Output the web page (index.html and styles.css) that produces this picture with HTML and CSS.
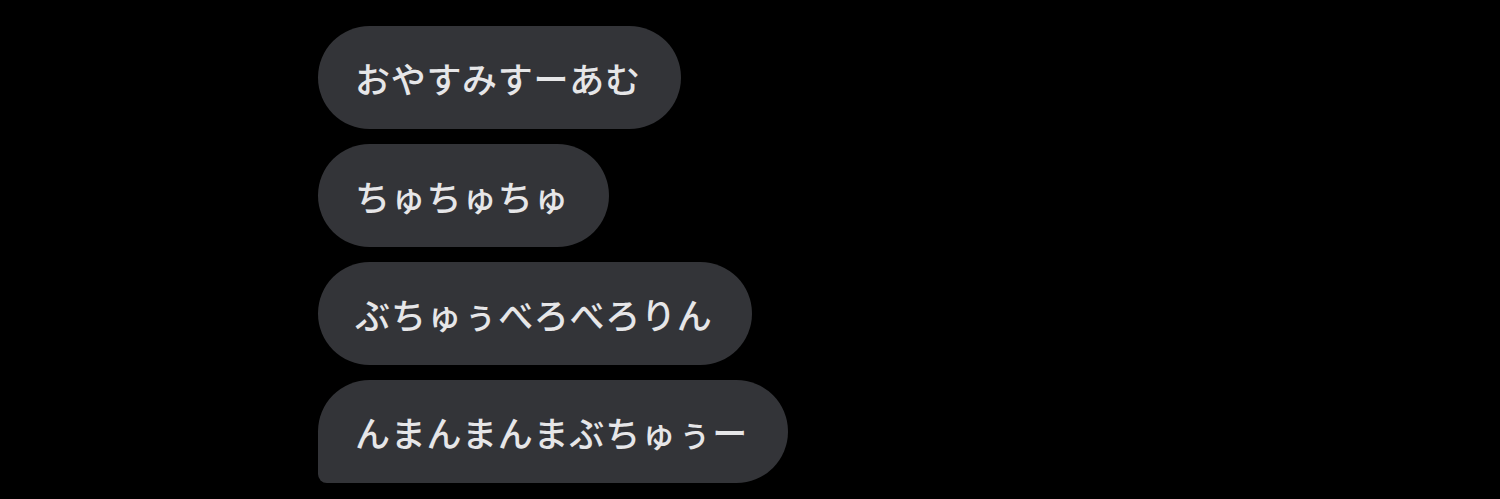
FILE: index.html
```html
<!DOCTYPE html>
<html lang="ja">
<head>
<meta charset="utf-8">
<link rel="stylesheet" href="styles.css">
</head>
<body>
<div class="thread">
  <div class="bubble">おやすみすーあむ</div>
  <div class="bubble">ちゅちゅちゅ</div>
  <div class="bubble">ぶちゅぅべろべろりん</div>
  <div class="bubble last">んまんまんまぶちゅぅー</div>
</div>
</body>
</html>
```
FILE: styles.css
```css
html, body {
  margin: 0;
  padding: 0;
  background: #000;
  width: 1500px;
  height: 499px;
  overflow: hidden;
}
.thread {
  display: flex;
  flex-direction: column;
  align-items: flex-start;
  gap: 15px;
  padding: 26px 0 0 318px;
}
.bubble {
  box-sizing: border-box;
  height: 103px;
  display: flex;
  align-items: center;
  padding: 0 40px 0 37px;
  background: #333438;
  color: #e6e6e8;
  border-radius: 52px;
  font-family: "Noto Sans CJK JP", "Noto Sans", sans-serif;
  font-size: 35px;
  letter-spacing: 0.7px;
  font-weight: 500;
  white-space: nowrap;
}
.bubble.last {
  border-bottom-left-radius: 9px;
}
```
